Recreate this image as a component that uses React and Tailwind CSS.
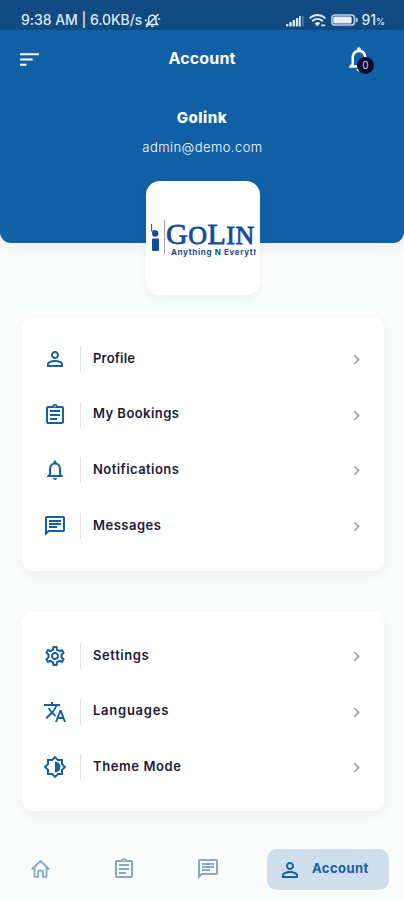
import React from 'react'
import {
  MdChevronRight,
  MdNotificationsNone,
  MdOutlineAssignment,
  MdOutlineBrightness6,
  MdOutlineChat,
  MdOutlineSettings,
  MdPersonOutline,
  MdSort,
  MdTranslate,
} from 'react-icons/md'

const ACCOUNT_ITEMS = [
  { label: 'Profile',       icon: MdPersonOutline,     spacing: 'tracking-[0.2px]' },
  { label: 'My Bookings',   icon: MdOutlineAssignment, spacing: 'tracking-[0.45px]' },
  { label: 'Notifications', icon: MdNotificationsNone, spacing: 'tracking-[0.45px]' },
  { label: 'Messages',      icon: MdOutlineChat,       spacing: 'tracking-[0.5px]' },
]

const APP_ITEMS = [
  { label: 'Settings',   icon: MdOutlineSettings,    spacing: 'tracking-[0.6px]' },
  { label: 'Languages',  icon: MdTranslate,          spacing: 'tracking-[0.75px]' },
  { label: 'Theme Mode', icon: MdOutlineBrightness6, spacing: 'tracking-[0.6px]' },
]

function StatusBar() {
  return (
    <div className="flex h-[30px] items-center bg-[#0f4a80] pl-[21px] pr-[19px] pt-[10px] text-[#dfe9f3]">
      <span className="whitespace-nowrap text-[14px] font-medium leading-none tracking-[-0.05px]">9:38 AM | 6.0KB/s</span>
      <svg className="ml-[2px] shrink-0" width="17" height="15" viewBox="0 0 17 15" fill="none" stroke="currentColor" strokeWidth="1.6">
        <path d="M3 11.5h10.5L12 9.5V6a3.7 3.7 0 0 0-7.4 0v3.5z" />
        <path d="M7 13.3h2.8M14.5 1 2 14M.8 7.5h2M14 6h2.2" />
      </svg>
      <div className="ml-auto flex items-center">
        <svg width="18" height="13" viewBox="0 0 18 13" fill="currentColor">
          <rect x="0" y="10" width="2.4" height="2.5" rx=".8" />
          <rect x="3.3" y="8" width="2.4" height="4.5" rx=".8" />
          <rect x="6.6" y="6" width="2.4" height="6.5" rx=".8" />
          <rect x="9.9" y="4" width="2.4" height="8.5" rx=".8" />
          <rect x="13" y="2" width="1.8" height="10.5" rx=".6" />
          <rect x="16.2" y="2" width="1.2" height="10.5" rx=".6" opacity=".45" />
        </svg>
        <svg className="ml-[5px]" width="17" height="14" viewBox="0 0 17 14" fill="none" stroke="currentColor" strokeWidth="1.9" strokeLinecap="round">
          <path d="M1.3 4.8a10.5 10.5 0 0 1 14.4 0M3.7 7.8a7 7 0 0 1 9.6 0" />
          <path d="M6.2 10.4a3.4 3.4 0 0 1 4.6 0L8.5 12.6z" fill="currentColor" strokeWidth="1" />
          <path d="M13 12.4h2.4" />
        </svg>
        <svg className="ml-[5px]" width="27" height="12" viewBox="0 0 27 12">
          <rect x=".9" y=".9" width="22.6" height="10.2" rx="3.2" fill="#0f4a80" stroke="#c3d4e5" strokeWidth="1.5" />
          <rect x="2.3" y="2.4" width="18.4" height="7.2" rx="1.6" fill="#e6edf4" />
          <rect x="24.8" y="3.8" width="1.8" height="4.4" rx=".9" fill="#c3d4e5" />
        </svg>
        <span className="ml-[3px] text-[14px] font-medium leading-none">91<span className="text-[9px]">%</span></span>
      </div>
    </div>
  )
}

function Header() {
  return (
    <header className="h-[243px] shrink-0 overflow-hidden rounded-b-[11px] bg-[#1160a6] text-white shadow-[0_5px_12px_rgba(0,40,80,0.06)]">
      <StatusBar />
      <div className="flex h-[58px] items-center justify-between pl-[17px] pr-[30px]">
        <MdSort className="size-[25px]" />
        <h1 className="pb-[2px] pl-[18px] text-[16px] font-bold tracking-[0.15px]">Account</h1>
        <div className="relative">
          <MdNotificationsNone className="size-[30px]" />
          <span className="absolute bottom-0 right-0 flex size-[17px] items-center justify-center rounded-full bg-[#080b2b] text-[10px] text-[#d9dae4]">0</span>
        </div>
      </div>
      <div className="flex flex-col items-center pt-[19px]">
        <p className="text-[15px] font-extrabold leading-[22px] tracking-[0.5px]">Golink</p>
        <p className="mt-[8px] pl-px text-[13px] font-light leading-5 tracking-[0.45px]">admin@demo.com</p>
      </div>
    </header>
  )
}

function Avatar() {
  return (
    <div className="relative -mt-[62px] ml-[146px] flex h-[114px] w-[114px] shrink-0 items-center rounded-[14px] bg-white pl-[5px] pr-[4px] shadow-[0_4px_10px_rgba(0,40,80,0.05)]">
      <div className="flex h-[40px] w-full overflow-hidden text-[#124c9a]">
        <svg className="mt-[5px] shrink-0" width="9" height="29" viewBox="0 0 9 29" fill="currentColor">
          <path d="M.6 1v7M.6 8h3" stroke="currentColor" strokeWidth="1" fill="none" />
          <circle cx="4.2" cy="10.5" r="3.2" />
          <rect x="1" y="15.5" width="7" height="12.5" rx="1" />
        </svg>
        <div className="ml-[4px] mt-[2px] h-[34px] w-px shrink-0 bg-[#9c9fb4]" />
        <div className="ml-px whitespace-nowrap">
          <p className="pt-px font-['Liberation_Serif',serif] text-[30px] leading-[30px] tracking-[0.5px] [-webkit-text-stroke:0.8px_currentColor]">
            G<span className="text-[26px]">O</span>L<span className="text-[26px]">IN</span>
          </p>
          <p className="-mt-[4px] pl-[5px] text-[8px] font-bold leading-[10px] tracking-[0.65px]">Anything N Everyth</p>
        </div>
      </div>
    </div>
  )
}

function MenuRow({ item }) {
  const Icon = item.icon
  return (
    <button className="flex h-[55.7px] w-full items-center pl-[21px] pr-[18px] text-left">
      <Icon className="size-[24px] shrink-0 text-[#17609f]" />
      <span className="ml-[13px] h-[26px] w-px bg-[#e0e2e6]" />
      <span className={`ml-[12px] pb-px text-[13px] font-semibold text-[#1c1b3a] ${item.spacing}`}>{item.label}</span>
      <MdChevronRight className="ml-auto mt-px size-[19px] text-[#999ca1]" />
    </button>
  )
}

function MenuCard({ items, className }) {
  return (
    <section className={`ml-[22px] w-[362px] shrink-0 rounded-[10px] bg-white shadow-[0_4px_12px_rgba(0,40,60,0.045)] ${className}`}>
      {items.map(item => <MenuRow key={item.label} item={item} />)}
    </section>
  )
}

function HomeIcon() {
  return (
    <svg className="mt-[19px]" width="23" height="24" viewBox="0 0 23 24" fill="none" stroke="currentColor" strokeWidth="1.8" strokeLinejoin="round" strokeLinecap="round">
      <path d="M3.2 12 11.5 4l8.3 8M5.5 10.5v9.3h3.7v-6.2h4.6v6.2h3.7v-9.3" />
    </svg>
  )
}

function BottomNav() {
  return (
    <nav className="mt-auto flex h-[62px] items-start pl-[29px] pr-[15px] text-[#84a9cb]">
      <HomeIcon />
      <MdOutlineAssignment className="ml-[60px] mt-[19px] size-[24px]" />
      <MdOutlineChat className="ml-[60px] mt-[19px] size-[24px]" />
      <div className="ml-auto mt-[11px] flex h-[41px] w-[122px] items-center rounded-[10px] bg-[#cfdeec] pl-[11px] text-[#1560a6]">
        <MdPersonOutline className="size-[24px]" />
        <span className="ml-[10px] pb-[2px] text-[13px] font-bold tracking-[0.45px]">Account</span>
      </div>
    </nav>
  )
}

export default function App() {
  return (
    <main className="flex h-[900px] w-[404px] flex-col overflow-hidden bg-[#fafbfb] font-['Inter',sans-serif]">
      <Header />
      <Avatar />
      <MenuCard items={ACCOUNT_ITEMS} className="mt-[22px] h-[254px] pt-[14px]" />
      <MenuCard items={APP_ITEMS} className="mt-[41px] h-[199px] pt-[16px]" />
      <BottomNav />
    </main>
  )
}
